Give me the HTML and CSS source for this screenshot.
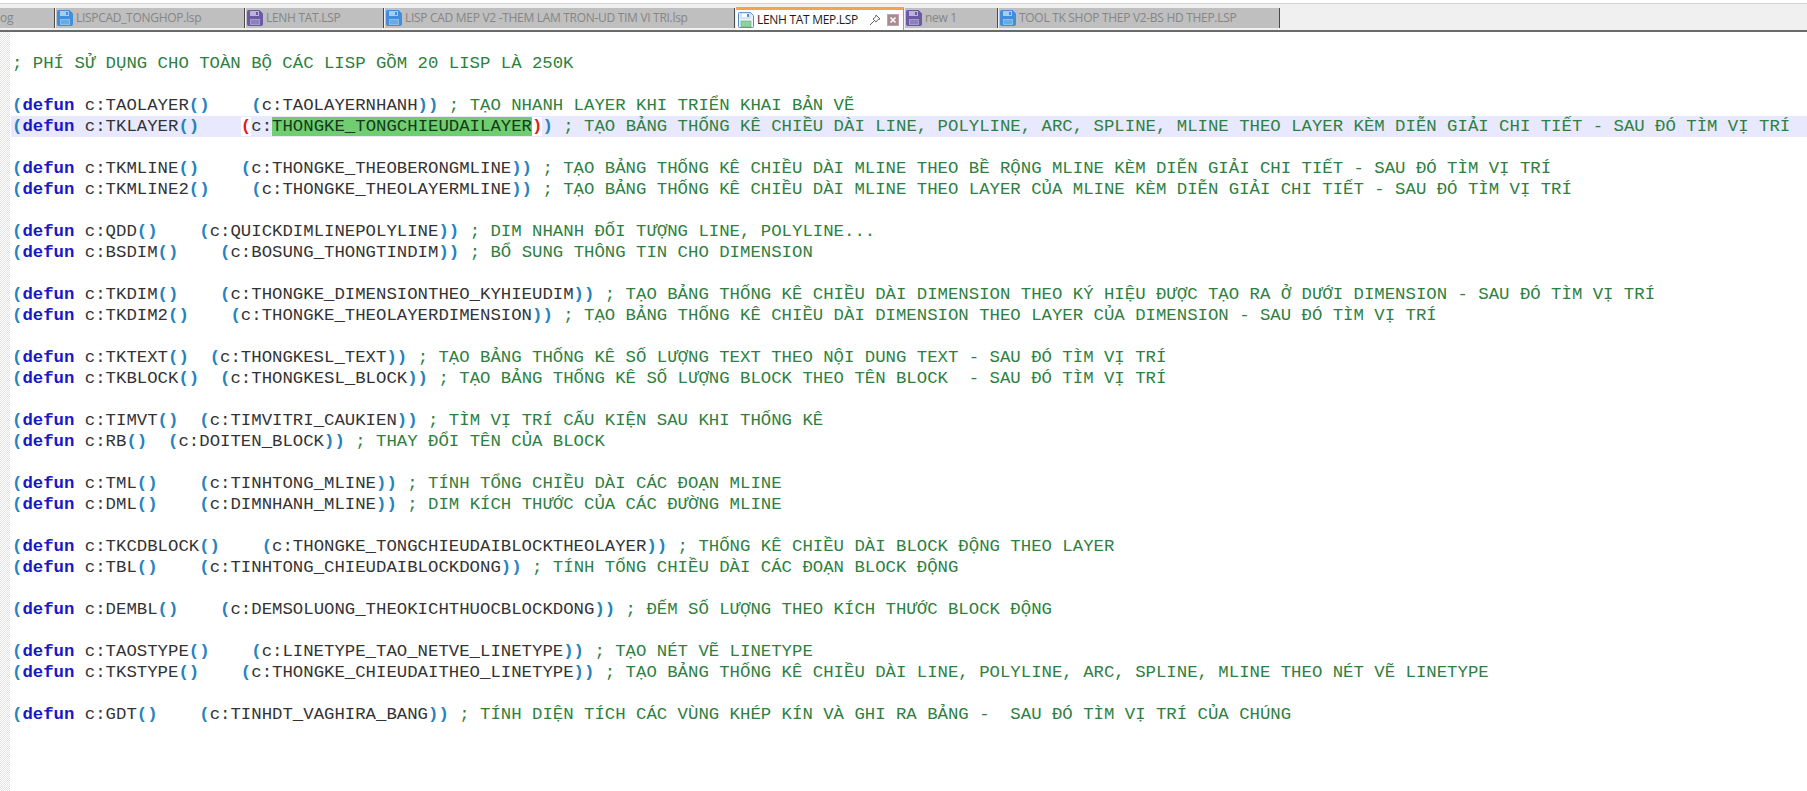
FILE: index.html
```html
<!DOCTYPE html>
<html lang="vi">
<head>
<meta charset="utf-8">
<title>LENH TAT MEP.LSP</title>
<link rel="stylesheet" href="styles.css">
</head>
<body>
<svg class="defs" width="0" height="0" aria-hidden="true">
  <symbol id="disk" viewBox="0 0 16 16">
    <path d="M.5 1.500a1 1 0 0 1 1-1h11l3 3v11a1 1 0 0 1-1 1h-13a1 1 0 0 1-1-1z" fill="currentColor" stroke="currentColor"/>
    <rect x="3" y="1" width="9" height="5" fill="#fff" opacity=".55"/>
    <rect x="9" y="2" width="2" height="3" fill="currentColor"/>
    <rect x="3" y="9" width="10" height="6" fill="#fff" opacity=".4"/>
    <path d="M4 11h8M4 13h8" stroke="currentColor" opacity=".8"/>
  </symbol>
  <symbol id="disk-active" viewBox="0 0 16 16">
    <path d="M.5 1.500a1 1 0 0 1 1-1h11l3 3v11a1 1 0 0 1-1 1h-13a1 1 0 0 1-1-1z" fill="#eaf3fb" stroke="#4f8fc8"/>
    <rect x="3" y="1" width="9" height="5" fill="#fff" stroke="#8db8dc" stroke-width=".6"/>
    <rect x="9" y="2" width="2" height="3" fill="#4f8fc8"/>
    <rect x="3" y="9" width="10" height="6" fill="#8fd19a" stroke="#5fae7a" stroke-width=".6"/>
  </symbol>
</svg>
<div class="tabbar">
  <div class="tab w-first"><span class="label">og</span></div>
  <div class="tab w-a"><svg class="ico blue"><use href="#disk"/></svg><span class="label">LISPCAD_TONGHOP.lsp</span></div>
  <div class="tab w-b"><svg class="ico purple"><use href="#disk"/></svg><span class="label">LENH TAT.LSP</span></div>
  <div class="tab w-c"><svg class="ico blue"><use href="#disk"/></svg><span class="label">LISP CAD MEP V2 -THEM LAM TRON-UD TIM VI TRI.lsp</span></div>
  <div class="tab active w-d"><svg class="ico"><use href="#disk-active"/></svg><span class="label">LENH TAT MEP.LSP</span>
    <svg class="pin" viewBox="0 0 12 12"><path d="M7 1l4 4-2 .5L7 8 4 5l2.500-2zM5 7l-4 4" fill="none" stroke="#666"/></svg>
    <span class="close"><svg viewBox="0 0 12 12"><path d="M3 3l6 6M9 3l-6 6" stroke="#fff" stroke-width="2"/></svg></span></div>
  <div class="tab w-e"><svg class="ico purple"><use href="#disk"/></svg><span class="label">new 1</span></div>
  <div class="tab w-f"><svg class="ico blue"><use href="#disk"/></svg><span class="label">TOOL TK SHOP THEP V2-BS HD THEP.LSP</span></div>
</div>
<div class="editor">
<div class="margin"></div>
<div class="code">
<div class="l"><span class="c">; PHÍ SỬ DỤNG CHO TOÀN BỘ CÁC LISP GỒM 20 LISP LÀ 250K</span></div>
<div class="l"></div>
<div class="l"><span class="p">(</span><span class="k">defun</span> c:TAOLAYER<span class="p">()</span>    <span class="p">(</span>c:TAOLAYERNHANH<span class="p">))</span> <span class="c">; TẠO NHANH LAYER KHI TRIỂN KHAI BẢN VẼ</span></div>
<div class="l cur"><span class="p">(</span><span class="k">defun</span> c:TKLAYER<span class="p">()</span>    <span class="brace">(</span>c:<span class="sel">THONGKE_TONGCHIEUDAILAYER</span><span class="brace">)</span><span class="p">)</span> <span class="c">; TẠO BẢNG THỐNG KÊ CHIỀU DÀI LINE, POLYLINE, ARC, SPLINE, MLINE THEO LAYER KÈM DIỄN GIẢI CHI TIẾT - SAU ĐÓ TÌM VỊ TRÍ</span></div>
<div class="l"></div>
<div class="l"><span class="p">(</span><span class="k">defun</span> c:TKMLINE<span class="p">()</span>    <span class="p">(</span>c:THONGKE_THEOBERONGMLINE<span class="p">))</span> <span class="c">; TẠO BẢNG THỐNG KÊ CHIỀU DÀI MLINE THEO BỀ RỘNG MLINE KÈM DIỄN GIẢI CHI TIẾT - SAU ĐÓ TÌM VỊ TRÍ</span></div>
<div class="l"><span class="p">(</span><span class="k">defun</span> c:TKMLINE2<span class="p">()</span>    <span class="p">(</span>c:THONGKE_THEOLAYERMLINE<span class="p">))</span> <span class="c">; TẠO BẢNG THỐNG KÊ CHIỀU DÀI MLINE THEO LAYER CỦA MLINE KÈM DIỄN GIẢI CHI TIẾT - SAU ĐÓ TÌM VỊ TRÍ</span></div>
<div class="l"></div>
<div class="l"><span class="p">(</span><span class="k">defun</span> c:QDD<span class="p">()</span>    <span class="p">(</span>c:QUICKDIMLINEPOLYLINE<span class="p">))</span> <span class="c">; DIM NHANH ĐỐI TƯỢNG LINE, POLYLINE...</span></div>
<div class="l"><span class="p">(</span><span class="k">defun</span> c:BSDIM<span class="p">()</span>    <span class="p">(</span>c:BOSUNG_THONGTINDIM<span class="p">))</span> <span class="c">; BỔ SUNG THÔNG TIN CHO DIMENSION</span></div>
<div class="l"></div>
<div class="l"><span class="p">(</span><span class="k">defun</span> c:TKDIM<span class="p">()</span>    <span class="p">(</span>c:THONGKE_DIMENSIONTHEO_KYHIEUDIM<span class="p">))</span> <span class="c">; TẠO BẢNG THỐNG KÊ CHIỀU DÀI DIMENSION THEO KÝ HIỆU ĐƯỢC TẠO RA Ở DƯỚI DIMENSION - SAU ĐÓ TÌM VỊ TRÍ</span></div>
<div class="l"><span class="p">(</span><span class="k">defun</span> c:TKDIM2<span class="p">()</span>    <span class="p">(</span>c:THONGKE_THEOLAYERDIMENSION<span class="p">))</span> <span class="c">; TẠO BẢNG THỐNG KÊ CHIỀU DÀI DIMENSION THEO LAYER CỦA DIMENSION - SAU ĐÓ TÌM VỊ TRÍ</span></div>
<div class="l"></div>
<div class="l"><span class="p">(</span><span class="k">defun</span> c:TKTEXT<span class="p">()</span>  <span class="p">(</span>c:THONGKESL_TEXT<span class="p">))</span> <span class="c">; TẠO BẢNG THỐNG KÊ SỐ LƯỢNG TEXT THEO NỘI DUNG TEXT - SAU ĐÓ TÌM VỊ TRÍ</span></div>
<div class="l"><span class="p">(</span><span class="k">defun</span> c:TKBLOCK<span class="p">()</span>  <span class="p">(</span>c:THONGKESL_BLOCK<span class="p">))</span> <span class="c">; TẠO BẢNG THỐNG KÊ SỐ LƯỢNG BLOCK THEO TÊN BLOCK  - SAU ĐÓ TÌM VỊ TRÍ</span></div>
<div class="l"></div>
<div class="l"><span class="p">(</span><span class="k">defun</span> c:TIMVT<span class="p">()</span>  <span class="p">(</span>c:TIMVITRI_CAUKIEN<span class="p">))</span> <span class="c">; TÌM VỊ TRÍ CẤU KIỆN SAU KHI THỐNG KÊ</span></div>
<div class="l"><span class="p">(</span><span class="k">defun</span> c:RB<span class="p">()</span>  <span class="p">(</span>c:DOITEN_BLOCK<span class="p">))</span> <span class="c">; THAY ĐỔI TÊN CỦA BLOCK</span></div>
<div class="l"></div>
<div class="l"><span class="p">(</span><span class="k">defun</span> c:TML<span class="p">()</span>    <span class="p">(</span>c:TINHTONG_MLINE<span class="p">))</span> <span class="c">; TÍNH TỔNG CHIỀU DÀI CÁC ĐOẠN MLINE</span></div>
<div class="l"><span class="p">(</span><span class="k">defun</span> c:DML<span class="p">()</span>    <span class="p">(</span>c:DIMNHANH_MLINE<span class="p">))</span> <span class="c">; DIM KÍCH THƯỚC CỦA CÁC ĐƯỜNG MLINE</span></div>
<div class="l"></div>
<div class="l"><span class="p">(</span><span class="k">defun</span> c:TKCDBLOCK<span class="p">()</span>    <span class="p">(</span>c:THONGKE_TONGCHIEUDAIBLOCKTHEOLAYER<span class="p">))</span> <span class="c">; THỐNG KÊ CHIỀU DÀI BLOCK ĐỘNG THEO LAYER</span></div>
<div class="l"><span class="p">(</span><span class="k">defun</span> c:TBL<span class="p">()</span>    <span class="p">(</span>c:TINHTONG_CHIEUDAIBLOCKDONG<span class="p">))</span> <span class="c">; TÍNH TỔNG CHIỀU DÀI CÁC ĐOẠN BLOCK ĐỘNG</span></div>
<div class="l"></div>
<div class="l"><span class="p">(</span><span class="k">defun</span> c:DEMBL<span class="p">()</span>    <span class="p">(</span>c:DEMSOLUONG_THEOKICHTHUOCBLOCKDONG<span class="p">))</span> <span class="c">; ĐẾM SỐ LƯỢNG THEO KÍCH THƯỚC BLOCK ĐỘNG</span></div>
<div class="l"></div>
<div class="l"><span class="p">(</span><span class="k">defun</span> c:TAOSTYPE<span class="p">()</span>    <span class="p">(</span>c:LINETYPE_TAO_NETVE_LINETYPE<span class="p">))</span> <span class="c">; TẠO NÉT VẼ LINETYPE</span></div>
<div class="l"><span class="p">(</span><span class="k">defun</span> c:TKSTYPE<span class="p">()</span>    <span class="p">(</span>c:THONGKE_CHIEUDAITHEO_LINETYPE<span class="p">))</span> <span class="c">; TẠO BẢNG THỐNG KÊ CHIỀU DÀI LINE, POLYLINE, ARC, SPLINE, MLINE THEO NÉT VẼ LINETYPE</span></div>
<div class="l"></div>
<div class="l"><span class="p">(</span><span class="k">defun</span> c:GDT<span class="p">()</span>    <span class="p">(</span>c:TINHDT_VAGHIRA_BANG<span class="p">))</span> <span class="c">; TÍNH DIỆN TÍCH CÁC VÙNG KHÉP KÍN VÀ GHI RA BẢNG -  SAU ĐÓ TÌM VỊ TRÍ CỦA CHÚNG</span></div>
</div>
</div>
</body>
</html>
```
FILE: styles.css
```css
html, body { margin: 0; height: 100%; overflow: hidden; background: #fff; }
body { display: flex; flex-direction: column; }
.defs { position: absolute; }

.tabbar {
  display: flex;
  gap: 1px;
  align-items: flex-start;
  flex: none;
  height: 22px;
  margin-top: 3px;
  padding-top: 4px;
  box-sizing: content-box;
  background: #f0f0f0;
  border-top: 1px solid #d4d4d4;
  border-bottom: 2px solid #6a6a6a;
  font: 12px/20px "Open Sans", "Noto Sans", sans-serif;
  letter-spacing: -0.3px;
  color: #868686;
}
.tab {
  flex: none;
  display: flex;
  align-items: center;
  gap: 3px;
  box-sizing: border-box;
  height: 20px;
  padding-left: 1px;
  background: #bfbfbf;
  border-right: 1px solid #4a4a4a;
  white-space: nowrap;
  overflow: hidden;
}
.w-first { width: 55px; padding-left: 0; }
.w-a { width: 189px; }
.w-b { width: 138px; }
.w-c { width: 350px; }
.w-d { width: 168px; }
.w-e { width: 93px; }
.w-f { width: 281px; }

.tab.active {
  height: 23px;
  margin-top: -1px;
  background: #fff;
  color: #1c1c1c;
  border-top: 3px solid #f8a24a;
  border-right-color: #9a9a9a;
  padding-left: 2px;
}
.ico { width: 16px; height: 16px; flex: none; }
.blue { color: #3f8fdc; }
.purple { color: #6b5aa6; }
.pin { width: 12px; height: 12px; margin-left: 8px; flex: none; }
.close {
  width: 12px;
  height: 12px;
  margin-left: 3px;
  flex: none;
  background: #a98a90;
  border: 1px solid #bfa6aa;
  box-sizing: border-box;
  display: flex;
}

.editor { flex: 1; display: flex; min-height: 0; }
.margin {
  width: 10px;
  flex: none;
  background: repeating-conic-gradient(#e2e2e2 0 25%, #fff 0 50%) 0 0 / 2px 2px;
}
.code {
  flex: 1;
  min-width: 0;
  padding-top: 21px;
  font: 17.330px/21px "Liberation Mono", "Courier New", monospace;
  color: #333;
}
.l { height: 21px; padding-left: 2px; white-space: pre; }
.cur { background: #e8e8ff; margin-left: 1px; padding-left: 1px; }
.k { font-weight: 700; color: #1818c8; }
.p { color: #2583bd; font-weight: 700; }
.c { color: #2e8040; }
.brace { background: #fff; color: #e02020; font-weight: 700; }
.sel { background: #6fce6f; color: #14391c; }
```
